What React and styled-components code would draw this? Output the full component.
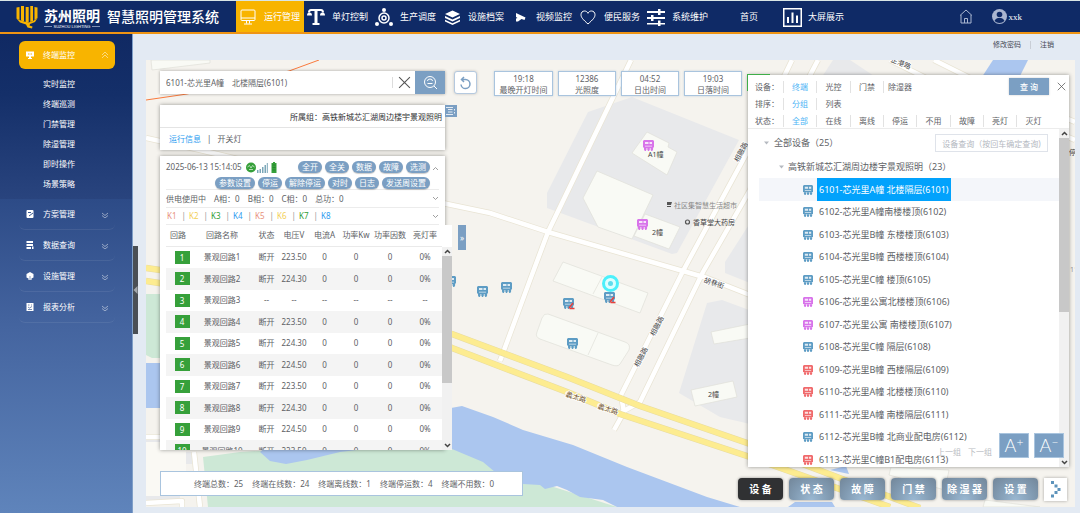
import React from "react";
import styled, { createGlobalStyle, css } from "styled-components";

const steel = "#7b9fc3";
const text = "#606266";

const GlobalStyle = createGlobalStyle`
  *, *::before, *::after { box-sizing: border-box; }
  html, body { margin: 0; padding: 0; }
  body {
    font-family: "Noto Sans", "Noto Sans CJK SC", sans-serif;
    font-size: 8px;
    line-height: 12px;
    color: ${text};
    background: #e3eaf3;
  }
  button, input { font: inherit; color: inherit; border: 0; padding: 0; margin: 0; background: none; }
  button { cursor: pointer; }
  a { color: inherit; text-decoration: none; }
  svg { display: block; flex: none; }
  ul { list-style: none; margin: 0; padding: 0; }
`;

const Page = styled.div`
  display: flex;
  flex-direction: column;
  height: 100vh;
  overflow: hidden;
`;

/* ---------- header ---------- */
const Header = styled.header`
  display: flex;
  align-items: stretch;
  height: 34px;
  flex: none;
  background: #0f2a66;
  border-top: 1px solid #d9e6e6;
  border-bottom: 2px solid #ee9414;
  color: #fff;
`;

const Brand = styled.div`
  display: flex;
  align-items: center;
  width: 236px;
  padding-left: 16px;
  flex: none;
`;

const BrandName = styled.div`
  display: flex;
  flex-direction: column;
  width: 56px;
  margin: 4px 7px 0 6px;
  font-size: 14px;
  line-height: 16px;
  font-weight: 700;
  white-space: nowrap;
`;

const BrandLatin = styled.span`
  display: flex;
  align-items: center;
  justify-content: center;
  gap: 2px;
  font: 400 4px/5px "Liberation Sans", sans-serif;
  &::before, &::after { content: ""; flex: 1; height: 1px; background: #8090b5; }
`;

const SystemName = styled.h1`
  margin: 0;
  font-size: 14px;
  line-height: 20px;
  font-weight: 500;
  white-space: nowrap;
`;

const Nav = styled.nav`
  display: flex;
  flex: 1;
`;

const NavItem = styled.a`
  display: flex;
  align-items: center;
  gap: 4px;
  width: 68px;
  font-size: 9px;
  white-space: nowrap;
  padding-top: 1px;
  ${(p) => p.$active && css`background: #f8b400;`}
`;

const NavIcon = styled.span`
  display: flex;
  justify-content: center;
  width: 24px;
`;

const HeaderTools = styled.div`
  display: flex;
  align-items: center;
  gap: 19px;
  padding-right: 58px;
`;

const UserLink = styled.a`
  display: flex;
  align-items: center;
  gap: 2px;
  font: 9px/12px "Liberation Serif", serif;
`;

/* ---------- frame ---------- */
const Body = styled.div`
  display: flex;
  flex: 1;
  min-height: 0;
`;

const Sidebar = styled.aside`
  width: 133px;
  flex: none;
  background: linear-gradient(#1f3d78 0, #2d4b87 165px, #44649f 290px, #5f84bb 100%);
  border-right: 1px solid #7f9fc8;
  color: #fff;
`;

const OpenGroup = styled.div`
  padding: 7px 17px 5px 19px;
  background: linear-gradient(#102963, #142f69 60px, #29447e);
`;

const GroupButton = styled.button`
  display: flex;
  align-items: center;
  width: 100%;
  height: 28px;
  padding: 0 6px 0 7px;
  border-radius: 6px;
  background: #f8b400;
  color: #fff;
`;

const GroupLabel = styled.span`
  flex: 1;
  text-align: left;
  padding-left: 9px;
`;

const SubList = styled.ul`
  padding-top: 5px;
`;

const SubItem = styled.li`
  height: 20px;
  padding-left: 24px;
  line-height: 20px;
`;

const ClosedGroups = styled.div`
  padding: 0 17px 0 19px;
`;

const ClosedButton = styled(GroupButton)`
  height: 31px;
  background: none;
  border-bottom: 1px solid #ffffff14;
`;

const Content = styled.div`
  display: flex;
  flex-direction: column;
  flex: 1;
  min-width: 0;
`;

const AccountBar = styled.div`
  display: flex;
  justify-content: flex-end;
  align-items: center;
  height: 26px;
  flex: none;
  padding: 0 26px 4px 0;
  font-size: 7px;
  color: #3f4652;
`;

const AccountLink = styled.a`
  padding: 0 9px;
  line-height: 8px;
  & + & { border-left: 1px solid #c9ced6; padding-right: 0; }
`;

const Workspace = styled.main`
  display: flex;
  flex: 1;
  min-height: 0;
  padding: 0 5px 6px 0;
`;

const Gutter = styled.div`
  width: 13px;
  flex: none;
  padding-top: 186px;
`;

const CollapseHandle = styled.button`
  display: flex;
  align-items: center;
  width: 5px;
  height: 88px;
  background: #4a4f55;
`;

const MapArea = styled.section`
  position: relative;
  flex: 1;
  min-width: 0;
  overflow: hidden;
  background: #f5f3ee;
`;

const MapSvg = styled.svg`
  position: absolute;
  inset: 0;
  width: 100%;
  height: 100%;
`;

const Overlay = styled.div`
  position: relative;
  display: flex;
  justify-content: space-between;
  height: 100%;
`;

/* ---------- left column ---------- */
const LeftZone = styled.div`
  display: flex;
  flex-direction: column;
  padding: 11px 0 11px 14px;
  min-height: 0;
`;

const TopTools = styled.div`
  display: flex;
  align-items: flex-start;
`;

const SearchBox = styled.form`
  display: flex;
  width: 285px;
  height: 23px;
  background: #fff;
  box-shadow: 0 0 3px #0005;
`;

const SearchInput = styled.input`
  flex: 1;
  min-width: 0;
  padding-left: 6px;
  outline: 0;
`;

const ClearButton = styled.button`
  display: flex;
  align-items: center;
  justify-content: center;
  width: 23px;
  height: 11px;
  margin-top: 6px;
  border-left: 1px solid #dcdcdc;
`;

const SearchButton = styled.button`
  display: flex;
  align-items: center;
  justify-content: center;
  width: 30px;
  background: ${steel};
`;

const RefreshButton = styled.button`
  display: flex;
  align-items: center;
  justify-content: center;
  width: 23px;
  height: 23px;
  margin: 0 17px 0 9px;
  background: #fff;
  border: 1px solid #b5c9df;
  border-radius: 3px;
  box-shadow: 0 0 3px #0003;
`;

const Stats = styled.div`
  display: flex;
  gap: 5px;
`;

const Stat = styled.div`
  width: 59px;
  height: 25px;
  padding-top: 1px;
  background: #fff;
  border: 1px solid #a9c4de;
  box-shadow: 0 0 2px #7b9fc366;
  text-align: center;
  line-height: 11px;
  white-space: nowrap;
  & + & { width: 58px; }
`;

const StatValue = styled.div``;

const PanelRow = styled.div`
  display: flex;
  align-items: flex-start;
`;

const GroupRow = styled(PanelRow)`
  margin: 9px 0 6px;
`;

const DeviceRow = styled(PanelRow)`
  flex: 1;
  min-height: 0;
`;

const Card = styled.section`
  width: 285px;
  background: #fff;
  box-shadow: 0 0 4px #0006;
`;

const CardTitle = styled.div`
  height: 23px;
  padding: 0 3px;
  border-bottom: 1px solid #e4e4e4;
  line-height: 24px;
  text-align: right;
  color: #303133;
  white-space: nowrap;
`;

const Tabs = styled.div`
  display: flex;
  gap: 6px;
  height: 22px;
  padding-left: 9px;
  line-height: 22px;
`;

const Tab = styled.button`
  color: ${(p) => (p.$active ? "#2d9cf0" : text)};
`;

const ListToggle = styled.button`
  display: flex;
  align-items: center;
  justify-content: center;
  width: 12px;
  height: 12px;
  background: ${steel};
`;

const DeviceCard = styled(Card)`
  display: flex;
  flex-direction: column;
  height: 100%;
  padding-left: 6px;
`;

const CardHead = styled.div`
  display: flex;
  justify-content: space-between;
  height: 34px;
  flex: none;
  padding-top: 5px;
  margin-right: 6px;
  border-bottom: 1px solid #ececec;
  position: relative;
`;

const TimeStamp = styled.div`
  display: flex;
  align-items: center;
  gap: 4px;
  height: 12px;
  white-space: nowrap;
`;

const ActionArea = styled.div`
  display: flex;
  flex-direction: column;
  align-items: flex-end;
  gap: 4px;
  margin-right: 9px;
  margin-left: -70px;
`;

const ActionRow = styled.div`
  display: flex;
  gap: 3px;
`;

const Pill = styled.button`
  height: 12px;
  padding: 0 4px;
  border-radius: 6px;
  background: ${steel};
  color: #fff;
  line-height: 12px;
  white-space: nowrap;
  box-shadow: 0 1px 1px #0003;
`;

const FoldButton = styled.button`
  display: flex;
  ${(p) => p.$corner && css`position: absolute; right: 0; top: 10px;`}
`;

const InfoRow = styled.div`
  display: flex;
  align-items: center;
  justify-content: space-between;
  height: ${(p) => (p.$first ? 18 : 17)}px;
  flex: none;
  margin-right: 6px;
  border-bottom: 1px solid #ececec;
`;

const PhaseList = styled.div`
  display: flex;
  gap: 8px;
  white-space: nowrap;
`;

const LoopList = styled.div`
  display: flex;
`;

const LoopLink = styled.a`
  width: 22px;
  padding-left: 1px;
  color: ${(p) => p.$color};
  &:not(:last-child)::after { content: "|"; color: #999; margin-left: 5px; }
`;

const TableBlock = styled.div`
  display: flex;
  flex-direction: column;
  flex: 1;
  width: 286px;
  min-height: 0;
  background: #fff;
`;

const TableScroll = styled.div`
  display: flex;
  flex: 1;
  min-height: 0;
  overflow: hidden;
`;

const LoopTable = styled.table`
  width: 276px;
  flex: none;
  align-self: flex-start;
  table-layout: fixed;
  border-collapse: collapse;
  text-align: center;
  white-space: nowrap;
`;

const Th = styled.th`
  height: 21px;
  padding: 0;
  padding-right: ${(p) => (p.$name ? 8 : 0)}px;
  font-weight: 400;
  border-bottom: 1px solid #eaeaea;
`;

const Tr = styled.tr`
  height: 21px;
  &:nth-child(even) { height: 22px; background: #f4f4f4; }
`;

const Td = styled.td`
  padding: 0;
  padding-right: ${(p) => (p.$name ? 8 : 0)}px;
`;

const LoopBadge = styled.span`
  display: block;
  width: 15px;
  margin: 0 auto;
  background: #36a03a;
  color: #fff;
  line-height: 13px;
`;

const ScrollBar = styled.div`
  display: flex;
  flex-direction: column;
  align-items: center;
  width: 10px;
  flex: none;
  padding: 2px 0;
  background: #f1f1f1;
`;

const ScrollThumb = styled.div`
  width: 100%;
  margin: 2px 0 auto;
  height: ${(p) => p.$size}%;
  background: #c8c8c8;
`;

const SideHandle = styled.button`
  width: 8px;
  height: 25px;
  margin: 69px 0 0 13px;
  background: ${steel};
  color: #fff;
`;

const StatusBar = styled.footer`
  display: flex;
  align-items: center;
  gap: 9px;
  width: 363px;
  height: 25px;
  flex: none;
  margin-top: 21px;
  padding-left: 33px;
  background: #fff;
  border: 1px solid #a9c4de;
  white-space: nowrap;
`;

/* ---------- right column ---------- */
const RightZone = styled.div`
  display: flex;
  flex-direction: column;
  align-items: flex-end;
  flex: none;
  padding: 15px 6px 6px 0;
  min-height: 0;
`;

const TreePanel = styled.section`
  position: relative;
  display: flex;
  flex-direction: column;
  flex: 1;
  min-height: 0;
  width: 321px;
  background: #fff;
  box-shadow: 0 0 4px #0006;
  &::before {
    content: "";
    position: absolute;
    left: -1px;
    top: -1px;
    width: 23px;
    height: 17px;
    border: solid #3fae49;
    border-width: 1px 0 0 1px;
  }
`;

const Filters = styled.div`
  display: flex;
  justify-content: space-between;
  height: 54px;
  flex: none;
  padding-top: 3px;
  border-bottom: 1px solid #ececec;
`;

const FilterRow = styled.div`
  display: flex;
  align-items: center;
  height: 17px;
  padding-left: 7px;
`;

const FilterLabel = styled.span`
  width: 28px;
  white-space: nowrap;
`;

const FilterOption = styled.button`
  width: ${(p) => (p.$wide ? 34 : 33)}px;
  border-left: 1px solid #e2e2e2;
  line-height: 12px;
  white-space: nowrap;
  color: ${(p) => (p.$active ? "#4db4f5" : text)};
`;

const FilterActions = styled.div`
  display: flex;
  align-items: flex-start;
  gap: 8px;
  padding-right: 3px;
  margin-left: -60px;
`;

const QueryButton = styled.button`
  width: 40px;
  height: 17px;
  background: ${steel};
  color: #fff;
  font-weight: 500;
  box-shadow: 0 0 2px #0003;
`;

const CloseButton = styled.button`
  display: flex;
  margin-top: 4px;
`;

const TreeBody = styled.div`
  display: flex;
  flex: 1;
  min-height: 0;
  overflow: hidden;
`;

const Tree = styled.div`
  flex: 1;
  min-width: 0;
  padding-left: 11px;
  font-size: 9px;
`;

const TreeRoot = styled.div`
  display: flex;
  align-items: center;
  gap: 5px;
  height: 26px;
  padding: 0 11px 0 5px;
  margin-top: 1px;
`;

const TreeGroup = styled.div`
  display: flex;
  align-items: center;
  gap: 4px;
  height: 22px;
  padding-left: 20px;
`;

const TreeInput = styled.input`
  width: 113px;
  height: 18px;
  margin-left: auto;
  border: 1px solid #dfe3ea;
  font-size: 8px;
  text-align: center;
  &::placeholder { color: #b4b8bf; }
`;

const TreeItem = styled.li`
  display: flex;
  align-items: center;
  gap: 4px;
  height: 23px;
  padding-left: 44px;
  background: ${(p) => (p.$active ? "#f4f6fa" : "#fff")};
  &:nth-child(even) { height: 22px; }
`;

const TreeName = styled.a`
  align-self: stretch;
  display: flex;
  align-items: center;
  padding: 0 2px;
  white-space: pre;
  ${(p) => p.$active && css`background: #02a2fc; color: #fff;`}
`;

const FloatTools = styled.div`
  position: absolute;
  right: 5px;
  bottom: 9px;
  display: flex;
  align-items: flex-end;
  gap: 5px;
`;

const GroupStep = styled.button`
  color: #b9bcc2;
  margin-right: 2px;
`;

const FontButton = styled.button`
  display: flex;
  align-items: center;
  justify-content: center;
  width: 30px;
  height: 25px;
  background: ${steel};
  border: 1px solid #a9c4de;
  color: #fff;
  font: 300 18px/23px Lato, sans-serif;
`;

const FontSign = styled.span`
  align-self: flex-start;
  font-size: 12px;
  line-height: 15px;
`;

const ModeRow = styled.div`
  display: flex;
  gap: 6px;
  margin: 11px 2px 0 -20px;
`;

const ModeButton = styled.button`
  width: 45px;
  height: 22px;
  border-radius: 4px;
  color: #fff;
  font-size: 10px;
  font-weight: 700;
  white-space: nowrap;
  box-shadow: 0 0 3px #0006;
  background: ${(p) =>
    p.$active
      ? "#303133"
      : "radial-gradient(ellipse at 50% 100%, #9ab8d2 0, #8099b0 60%, #728699 100%)"};
`;

const MoreButton = styled.button`
  display: flex;
  align-items: center;
  justify-content: center;
  width: 23px;
  height: 23px;
  background: #fff;
  box-shadow: 0 0 3px #0005;
`;

/* ---------- drawings ---------- */
const Logo = () => (
  <svg width="22" height="24" viewBox="0 0 22 24" fill="#f8b400">
    <path d="M0.500 2.500L3.500 2V15L0.500 13.500zM5 1H8V16.500L5 15.500zM9.700 2H12.700V17.500H9.700zM14.300 1H17V16L14.300 17zM18.500 2L21.500 2.500V13L18.500 15z" />
    <path d="M0.500 13.500L3.500 15 8 16.500 12.700 17.500 17 16 21.500 13 19 17 14 19 13.500 20.500 16.500 21.500 16 23.500 11.500 22.500 10 19.500 4 17.500z" />
  </svg>
);

const stroke = { fill: "none", stroke: "#fff" };
const navIcons = {
  monitor: (
    <svg width="16" height="16" viewBox="0 0 16 16" {...stroke}>
      <rect x="1" y="1" width="14" height="10.500" rx="1" />
      <path d="M1 9h14M6.500 11.500v3M9.500 11.500v3M4 15h8" />
    </svg>
  ),
  lamp: (
    <svg width="18" height="18" viewBox="0 0 18 18" fill="#fff">
      <path d="M4 1h10c2 0 3 1.500 3 3.500h-2c0-1-.5-1.500-1.500-1.500H10.500v12h2v2h-7v-2h2V3H4.500C3.500 3 3 3.500 3 4.500H1C1 2.500 2 1 4 1z" />
      <path d="M0 7.500a2.500 3 0 0 1 5 0zM13 7.500a2.500 3 0 0 1 5 0z" />
    </svg>
  ),
  dispatch: (
    <svg width="18" height="18" viewBox="0 0 18 18" {...stroke}>
      <circle cx="9" cy="10" r="5" strokeWidth="1.500" />
      <circle cx="9" cy="10" r="2" strokeWidth="1.500" />
      <g fill="#fff" stroke="none"><circle cx="9" cy="2" r="2" /><circle cx="2" cy="16" r="2" /><circle cx="16" cy="16" r="2" /></g>
    </svg>
  ),
  layers: (
    <svg width="15" height="15" viewBox="0 0 15 15" fill="#fff">
      <path d="M7.500 0.500L15 4 7.500 7.500 0 4zM0 6l7.500 3.500L15 6v2L7.500 11.500 0 8zM0 9.800l7.500 3.500L15 9.800v1.700L7.500 15 0 11.500z" />
    </svg>
  ),
  camera: (
    <svg width="11" height="11" viewBox="0 0 11 11" fill="#fff">
      <path d="M1 1l9.500 4.500-1 2.500-3-1L3 9.500H1V6.500L2.500 6 1 5z" />
    </svg>
  ),
  heart: (
    <svg width="16" height="15" viewBox="0 0 16 15" {...stroke}>
      <path d="M8 14C3 9.500 1 7.500 1 4.700 1 2.500 2.500 1 4.500 1 6 1 7.300 1.800 8 3.300 8.700 1.800 10 1 11.500 1 13.500 1 15 2.500 15 4.700 15 7.500 13 9.500 8 14z" />
    </svg>
  ),
  sliders: (
    <svg width="18" height="17" viewBox="0 0 18 17" fill="#fff">
      <path d="M0 2h18v2H0zM0 8h18v2H0zM0 14h18v1.500H0z" />
      <rect x="11" y="0" width="2.500" height="6" /><rect x="4" y="6" width="2.500" height="6" /><rect x="11" y="11.500" width="2.500" height="5.500" />
    </svg>
  ),
  chart: (
    <svg width="19" height="19" viewBox="0 0 19 19" fill="#fff">
      <path d="M0 0h19v19H0zM1.500 1.500v16h16v-16z" fillRule="evenodd" />
      <path d="M4 9h2v6H4zM8.500 4.500h2V15h-2zM13 7.500h2V15h-2z" />
    </svg>
  ),
};

const sideIcons = {
  board: <svg width="8" height="8" viewBox="0 0 8 8" fill="#fff"><path d="M0 0.500h8v5H5V7h1v1H2V7h1V5.500H0zM2 2.500v1h1.500V2.500zM4.500 2.500v1H6v-1z" fillRule="evenodd" /></svg>,
  plan: <svg width="8" height="8" viewBox="0 0 8 8"><rect width="7" height="8" x="0.500" rx="1" fill="#fff" /><path d="M2 2.500h3M3 6l4-3" stroke="#3b5a94" fill="none" /></svg>,
  data: <svg width="8" height="8" viewBox="0 0 8 8" fill="#fff"><path d="M0.500 0h6.500v2H0.500zM0.500 3h6.500v2H0.500zM0.500 6H5v2H0.500zM6 5.500h1.500V8H6z" /></svg>,
  device: <svg width="8" height="8" viewBox="0 0 8 8" fill="#fff"><path d="M4 0l3.500 2v3.500L5.500 6.500V8h-3V6.500L0.500 5.500V2z" /><path d="M4 4v4" stroke="#3b5a94" strokeWidth="0.600" /></svg>,
  report: <svg width="8" height="8" viewBox="0 0 8 8"><rect x="0.500" width="7" height="8" fill="#fff" /><path d="M2 2h1.500M5 2h1M2 4l1.500 1L6 3.500M2 6.500h4" stroke="#3b5a94" strokeWidth="0.700" fill="none" /></svg>,
};

const DoubleChevron = ({ up }) => (
  <svg width="8" height="8" viewBox="0 0 8 8" fill="none" stroke="#fff" strokeWidth="0.700" opacity="0.7">
    <path d={up ? "M1 4l3-3 3 3M1 7l3-3 3 3" : "M1 3l3 2.500 3-2.500M1 5.500l3 2.500 3-2.500"} />
  </svg>
);

const Chevron = ({ up, bold }) => (
  <svg width="7" height="5" viewBox="0 0 7 5" fill="none" stroke={bold ? "#444" : "#888"} strokeWidth={bold ? 1.5 : 0.8}>
    <path d={up ? "M1 4l2.500-2.500L6 4" : "M1 1l2.500 2.500L6 1"} />
  </svg>
);

const Cross = ({ size }) => (
  <svg width={size} height={size} viewBox="0 0 12 12" stroke="#555" fill="none"><path d="M1 1l10 10M11 1L1 11" /></svg>
);

const Caret = () => (
  <svg width="5" height="4" viewBox="0 0 5 4" fill="#b5b9c0"><path d="M0 0.500h5L2.500 3.500z" /></svg>
);

const DeviceShape = ({ color }) => (
  <g>
    <path d="M1 0h9L11 1v6L10 8H1L0 7V1z" fill={color} />
    <path d="M2 2h3.500v2H2zM6.500 2H9v2H6.500zM2 5.800h7v0.700H2z" fill="#fff" opacity="0.8" />
    <path d="M1 8h2.500v1.500L2.800 11h-1L1 9.500zM4.300 8h2.500v1.500L6 11H5L4.300 9.500zM7.600 8h2.500v1.500L9.300 11h-1l-.7-1.500z" fill={color} />
  </g>
);

const DeviceIcon = ({ color }) => (
  <svg width="10" height="10" viewBox="0 0 11 11"><DeviceShape color={color} /></svg>
);

const Pin = ({ x, y, color, alarm }) => (
  <g transform={`translate(${x} ${y})`}>
    <DeviceShape color={color} />
    {alarm && <path d="M6 10l4-5M6.500 10.500h5" stroke="#e8403c" strokeWidth="1.500" fill="none" />}
  </g>
);

const roads = {
  white: [
    "M631 60L548 232L530 280L500 361",
    "M146 138L200 150L250 162L380 188L447 204L490 213L548 232L683 271L707 278L750 295L790 312",
    "M792 60L750 147L683 271L621 395L624 412L614 430",
    "M818 60L750 190L703 272L640 402L622 412",
    "M890 60L930 80L1075 140",
    "M934 60L970 78L1075 122",
    "M146 437L200 437M146 503L182 501L182 507M194 452L200 507",
  ],
  yellow: [
    "M146 268L300 290L452 334L567 377L640 406L750 444L850 482L920 508",
    "M146 281L300 305L452 348L567 392L620 414L750 457L890 507",
  ],
};

const buildings = [
  "M647 132L669 143L668 147L677 152L667 175L632 153z",
  "M597 171L653 195L632 239L598 227L583 198z",
  "M645 214L680 227L669 249L634 236z",
  "M563 262L648 293L640 313L553 281zM602 277L593 294",
  "M548 314L625 342Q631 344 629 350L620 364Q618 367 612 365L540 339Q535 337 537 332L542 318Q544 313 548 314zM598 333L588 355",
  "M711 332L750 324L750 338L714 344z",
  "M691 390L733 381L737 397L695 406z",
  "M151 60L152 70L210 63L210 60z",
  "M891 467L889 475L945 490L949 470z",
  "M985 500L983 507L1040 507z",
];

const RoadLabel = ({ x, y, r, children, fill = "#444" }) => (
  <text x={x} y={y} fontSize="7" fill={fill} stroke="#fff" strokeWidth="1.500" paintOrder="stroke" textAnchor="middle" dominantBaseline="central" transform={`rotate(${r} ${x} ${y})`}>
    {children}
  </text>
);

const CityMap = () => (
  <MapSvg viewBox="146 60 929 447" preserveAspectRatio="xMidYMid slice">
    <rect x="0" y="0" width="1400" height="900" fill="#f5f3ee" />
    <g fill="#e8e9eb">
      <path d="M588 112L632 97L739 140L677 253L672 254L547 208L547 193z" />
      <path d="M707 303L722 300L790 325V450L750 424L720 417L679 393z" />
      <path d="M750 223L725 262V273L750 283H800V200z" />
      <path d="M833 60L820 80H880L850 60z" />
      <path d="M170 452h22v12h-22zM146 440h40v3h-40zM146 496h34v4h-34z" />
    </g>
    <path d="M146 442h40v54h-40z" fill="#faf9f4" />
    <g fill="#cde8d6">
      <path d="M146 294H175V358H152L146 355z" />
      <path d="M203 457L240 452L452 440L500 470L617 507H208z" />
    </g>
    <g fill="#abc6ef">
      <path d="M146 363H170V408H146z" />
      <path d="M260 452L270 461L286 464L307 460L340 452L440 440L452 449L483 462L495 472L523 484L540 485L545 489L557 486L567 490L580 497L603 500L617 507H740L707 497L627 467L573 445L523 430L493 417L462 406L440 410L300 420z" />
      <path d="M993 60H1028L1018 80H980z" />
      <path d="M846 466L849 474L830 470zM788 507L795 502H832L835 507z" />
    </g>
    <g fill="none" strokeLinejoin="round">
      {roads.white.map((d) => <path key={d} d={d} stroke="#e9e4d4" strokeWidth="6" />)}
      {roads.white.map((d) => <path key={d} d={d} stroke="#fff" strokeWidth="4.500" />)}
      {roads.yellow.map((d) => <path key={d} d={d} stroke="#e8dca0" strokeWidth="6.500" />)}
      {roads.yellow.map((d) => <path key={d} d={d} stroke="#fdec90" strokeWidth="5.500" />)}
      <path d="M146 100L187 94L289 71L319 60" stroke="#f97a3d" />
    </g>
    <g fill="#f9faf5" stroke="#dfdfd9" strokeWidth="0.700">
      {buildings.map((d) => <path key={d} d={d} />)}
    </g>
    <RoadLabel x={741} y={152} r={-62}>相融路</RoadLabel>
    <RoadLabel x={657} y={326} r={-62}>相融路</RoadLabel>
    <RoadLabel x={641} y={357} r={-62}>相融路</RoadLabel>
    <RoadLabel x={714} y={283} r={18}>胡巷街</RoadLabel>
    <RoadLabel x={576} y={397} r={18} fill="#6a4a1a">蠡太路</RoadLabel>
    <RoadLabel x={608} y={409} r={18} fill="#6a4a1a">蠡太路</RoadLabel>
    <RoadLabel x={901} y={63} r={22}>芷港路</RoadLabel>
    <text x="648" y="157" fontSize="7" fill="#444">A1幢</text>
    <text x="652" y="235" fontSize="7" fill="#444">2幢</text>
    <text x="708" y="397" fontSize="7" fill="#444">2幢</text>
    <text x="674" y="208" fontSize="7" fill="#888">社区集智慧生活超市</text>
    <text x="693" y="225" fontSize="7" fill="#444">香草堂大药房</text>
    <path d="M667 202h5l-1 3h-4zM667 206h4v1h-4z" fill="#555" />
    <circle cx="687.500" cy="222" r="2" fill="none" stroke="#555" strokeWidth="1.200" />
    <Pin x={643} y={140} color="#d873ea" />
    <Pin x={637} y={219} color="#d873ea" />
    <Pin x={445} y={276} color="#5d9cc4" />
    <Pin x={477} y={286} color="#5d9cc4" />
    <Pin x={501} y={282} color="#5d9cc4" />
    <Pin x={563} y={298} color="#5d9cc4" alarm />
    <Pin x={604} y={292} color="#5d9cc4" alarm />
    <Pin x={567} y={338} color="#5d9cc4" />
    <circle cx="610.500" cy="283.500" r="7" fill="#dff" stroke="#4cf0fb" strokeWidth="3" />
    <circle cx="610.500" cy="283.500" r="2.500" fill="#5fdcec" />
    <text x="1070" y="272" fontSize="7" fill="#999">11</text>
    <text x="1069" y="155" fontSize="7" fill="#444">停</text>
  </MapSvg>
);

/* ---------- data ---------- */
const nav = [
  ["运行管理", "monitor"], ["单灯控制", "lamp"], ["生产调度", "dispatch"], ["设施档案", "layers"],
  ["视频监控", "camera"], ["便民服务", "heart"], ["系统维护", "sliders"], ["首页", null], ["大屏展示", "chart"],
];
const subItems = ["实时监控", "终端巡测", "门禁管理", "除湿管理", "即时操作", "场景策略"];
const closed = [["方案管理", "plan"], ["数据查询", "data"], ["设施管理", "device"], ["报表分析", "report"]];
const stats = [["19:18", "最晚开灯时间"], ["12386", "光照度"], ["04:52", "日出时间"], ["19:03", "日落时间"]];
const actions = [
  ["全开", "全关", "数据", "故障", "选测"],
  ["参数设置", "停运", "解除停运", "对时", "日志", "发送周设置"],
];
const loopColors = ["#e8927c", "#f3cf55", "#2f9e35", "#2d9cf0"];
const columns = [["回路", 32], ["回路名称", 56], ["状态", 25], ["电压V", 30], ["电流A", 31], ["功率Kw", 32], ["功率因数", 36], ["亮灯率", 34]];
const volts = ["223.50", "224.30", null, "223.50", "224.30", "224.50", "223.50", "224.30", "224.50", "223.50"];
const totals = ["终端总数：25", "终端在线数：24", "终端离线数：1", "终端停运数：4", "终端不用数：0"];
const filters = [
  ["设备：", ["终端", "光控", "门禁", "除湿器"]],
  ["排序：", ["分组", "列表"]],
  ["状态：", ["全部", "在线", "离线", "停运", "不用", "故障", "亮灯", "灭灯"]],
];
const blue = "#5d9cc4", pink = "#d873ea", red = "#f06a6c";
const devices = [
  ["6101-芯光里A幢 北楼隔层(6101)", blue], ["6102-芯光里A幢南楼楼顶(6102)", blue],
  ["6103-芯光里B幢 东楼楼顶(6103)", blue], ["6104-芯光里B幢 西楼楼顶(6104)", blue],
  ["6105-芯光里C幢 楼顶(6105)", blue], ["6106-芯光里公寓北楼楼顶(6106)", pink],
  ["6107-芯光里公寓 南楼楼顶(6107)", pink], ["6108-芯光里C幢 隔层(6108)", blue],
  ["6109-芯光里B幢 西楼隔层(6109)", red], ["6110-芯光里A幢 北楼楼顶(6110)", red],
  ["6111-芯光里A幢 南楼隔层(6111)", red], ["6112-芯光里B幢 北商业配电房(6112)", blue],
  ["6113-芯光里C幢B1配电房(6113)", red],
];
const modes = ["设 备", "状 态", "故 障", "门 禁", "除 湿 器", "设 置"];

const Scroller = ({ size }) => (
  <ScrollBar>
    <Chevron up bold />
    <ScrollThumb $size={size} />
    <Chevron bold />
  </ScrollBar>
);

const TopHeader = () => (
  <Header>
    <Brand>
      <Logo />
      <BrandName>苏州照明<BrandLatin>SUZHOU LIGHTING</BrandLatin></BrandName>
      <SystemName>智慧照明管理系统</SystemName>
    </Brand>
    <Nav>
      {nav.map(([label, icon], i) => (
        <NavItem key={label} href="#" $active={i === 0}>
          <NavIcon>{icon && navIcons[icon]}</NavIcon>
          {label}
        </NavItem>
      ))}
    </Nav>
    <HeaderTools>
      <a href="#" aria-label="主页">
        <svg width="14" height="15" viewBox="0 0 14 15" fill="none" stroke="#aab6d0">
          <path d="M1 6.500L7 1l6 5.500M2 6v8h10V6M5.500 14v-4.500h3V14" />
        </svg>
      </a>
      <UserLink href="#">
        <svg width="15" height="15" viewBox="0 0 15 15">
          <circle cx="7.500" cy="7.500" r="7.500" fill="#aab6d0" />
          <circle cx="7.500" cy="5.500" r="2.800" fill="#0f2a66" />
          <path d="M2.500 12c1-2.500 3-3 5-3s4 .5 5 3c-3 2.500-7 2.500-10 0z" fill="#0f2a66" />
        </svg>
        xxk
      </UserLink>
    </HeaderTools>
  </Header>
);

const SideMenu = () => (
  <Sidebar>
    <OpenGroup>
      <GroupButton>{sideIcons.board}<GroupLabel>终端监控</GroupLabel><DoubleChevron up /></GroupButton>
      <SubList>
        {subItems.map((s) => <SubItem key={s}><a href="#">{s}</a></SubItem>)}
      </SubList>
    </OpenGroup>
    <ClosedGroups>
      {closed.map(([label, icon]) => (
        <ClosedButton key={label}>{sideIcons[icon]}<GroupLabel>{label}</GroupLabel><DoubleChevron /></ClosedButton>
      ))}
    </ClosedGroups>
  </Sidebar>
);

const LeftColumn = () => (
  <LeftZone>
    <TopTools>
      <SearchBox onSubmit={(e) => e.preventDefault()}>
        <SearchInput aria-label="终端" defaultValue="6101-芯光里A幢　北楼隔层(6101)" />
        <ClearButton type="button" aria-label="清除"><Cross size={13} /></ClearButton>
        <SearchButton aria-label="搜索">
          <svg width="15" height="15" viewBox="0 0 15 15" fill="none" stroke="#fff">
            <circle cx="7" cy="7" r="5.500" /><path d="M11 11l3 3M4.500 6a2.500 2 0 0 1 5 0M4.500 8.500h5" />
          </svg>
        </SearchButton>
      </SearchBox>
      <RefreshButton aria-label="刷新">
        <svg width="13" height="14" viewBox="0 0 13 14" fill="none" stroke={steel} strokeWidth="1.500">
          <path d="M5 1L2.500 3.500 5 6M2.500 3.500H6.500a4.500 4.500 0 1 1-4.500 5" />
        </svg>
      </RefreshButton>
      <Stats>
        {stats.map(([v, l]) => <Stat key={l}><StatValue>{v}</StatValue>{l}</Stat>)}
      </Stats>
    </TopTools>
    <GroupRow>
      <Card>
        <CardTitle>所属组：高铁新城芯汇湖周边楼宇景观照明</CardTitle>
        <Tabs><Tab $active>运行信息</Tab>|<Tab>开关灯</Tab></Tabs>
      </Card>
      <ListToggle aria-label="列表">
        <svg width="10" height="8" viewBox="0 0 10 8" stroke="#fff" fill="none" strokeWidth="0.800">
          <path d="M0 0.500h7M2 2.500h4.500M2 5h4.500M0 7.500h7M8.500 2v1.500M8.500 5v1.500" />
        </svg>
      </ListToggle>
    </GroupRow>
    <DeviceRow>
      <DeviceCard>
        <CardHead>
          <TimeStamp>
            2025-06-13 15:14:05
            <svg width="31" height="11" viewBox="0 0 31 11">
              <circle cx="5" cy="5.500" r="5" fill="#36a03a" />
              <path d="M1.500 5l2-1.500L5 6l1.500-2.500L8.500 5M3 7.500h4" stroke="#cfe8d0" fill="none" strokeWidth="0.800" />
              <path d="M11 8h1.500v3H11zM13.500 7H15v4h-1.500zM16 5h1.500v6H16zM18.500 3H20v8h-1.500zM20.800 1h1v10h-1z" fill="#7ba7b8" />
              <path d="M27 0h2v1h1.500v10h-5V1H27z" fill="#36a03a" /><path d="M26.500 3h3M26.500 5.500h3M26.500 8h3" stroke="#1f7a28" strokeWidth="0.600" />
            </svg>
          </TimeStamp>
          <ActionArea>
            {actions.map((row) => (
              <ActionRow key={row[0]}>{row.map((a) => <Pill key={a}>{a}</Pill>)}</ActionRow>
            ))}
          </ActionArea>
          <FoldButton $corner aria-label="收起"><Chevron up /></FoldButton>
        </CardHead>
        <InfoRow $first>
          <PhaseList>
            <span>供电使用中</span><span>A相：0</span><span>B相：0</span><span>C相：0</span><span>总功：0</span>
          </PhaseList>
          <FoldButton aria-label="展开"><Chevron /></FoldButton>
        </InfoRow>
        <InfoRow>
          <LoopList>
            {[1, 2, 3, 4, 5, 6, 7, 8].map((n) => (
              <LoopLink key={n} href="#" $color={loopColors[(n - 1) % 4]}>K{n}</LoopLink>
            ))}
          </LoopList>
          <FoldButton aria-label="展开"><Chevron /></FoldButton>
        </InfoRow>
        <TableBlock>
          <LoopTable>
            <colgroup>{columns.map(([c, w]) => <col key={c} width={w} />)}</colgroup>
            <thead><tr>{columns.map(([c], i) => <Th key={c} $name={i < 2}>{c}</Th>)}</tr></thead>
          </LoopTable>
          <TableScroll>
            <LoopTable>
              <colgroup>{columns.map(([c, w]) => <col key={c} width={w} />)}</colgroup>
              <tbody>
                {volts.map((v, i) => (
                  <Tr key={i}>
                    <Td><LoopBadge>{i + 1}</LoopBadge></Td>
                    <Td $name>景观回路{i + 1}</Td>
                    <Td>{v ? "断开" : "--"}</Td>
                    <Td>{v || "--"}</Td>
                    {[0, 1, 2].map((k) => <Td key={k}>{v ? "0" : "--"}</Td>)}
                    <Td>{v ? "0%" : "--"}</Td>
                  </Tr>
                ))}
              </tbody>
            </LoopTable>
            <Scroller size={64} />
          </TableScroll>
        </TableBlock>
      </DeviceCard>
      <SideHandle aria-label="展开面板">»</SideHandle>
    </DeviceRow>
    <StatusBar>{totals.map((t) => <span key={t}>{t}</span>)}</StatusBar>
  </LeftZone>
);

const RightColumn = () => (
  <RightZone>
    <TreePanel>
      <Filters>
        <div>
          {filters.map(([label, options]) => (
            <FilterRow key={label}>
              <FilterLabel>{label}</FilterLabel>
              {options.map((o, i) => <FilterOption key={o} $active={i === 0} $wide={i % 3 === 1}>{o}</FilterOption>)}
            </FilterRow>
          ))}
        </div>
        <FilterActions>
          <QueryButton>查 询</QueryButton>
          <CloseButton aria-label="关闭"><Cross size={9} /></CloseButton>
        </FilterActions>
      </Filters>
      <TreeBody>
        <Tree>
          <TreeRoot><Caret />全部设备（25）<TreeInput aria-label="设备查询" placeholder="设备查询（按回车确定查询)" /></TreeRoot>
          <TreeGroup><Caret />高铁新城芯汇湖周边楼宇景观照明（23）</TreeGroup>
          <ul>
            {devices.map(([name, color], i) => (
              <TreeItem key={name} $active={i === 0}>
                <DeviceIcon color={color} />
                <TreeName href="#" $active={i === 0}>{name}</TreeName>
              </TreeItem>
            ))}
          </ul>
        </Tree>
        <Scroller size={52} />
      </TreeBody>
      <FloatTools>
        <GroupStep>上一组</GroupStep>
        <GroupStep>下一组</GroupStep>
        <FontButton aria-label="放大字体">A<FontSign>+</FontSign></FontButton>
        <FontButton aria-label="缩小字体">A<FontSign>−</FontSign></FontButton>
      </FloatTools>
    </TreePanel>
    <ModeRow>
      {modes.map((m, i) => <ModeButton key={m} $active={i === 0}>{m}</ModeButton>)}
      <MoreButton aria-label="更多">
        <svg width="11" height="17" viewBox="0 0 11 17" fill="#5d93bb">
          <path d="M1 0h3v3H1zM4.500 3.500h3v3h-3zM7.500 7h3v3h-3zM4.500 10h3v3h-3zM1 13.500h3v3H1z" />
        </svg>
      </MoreButton>
    </ModeRow>
  </RightZone>
);

export default function App() {
  return (
    <Page>
      <GlobalStyle />
      <TopHeader />
      <Body>
        <SideMenu />
        <Content>
          <AccountBar>
            <AccountLink href="#">修改密码</AccountLink>
            <AccountLink href="#">注销</AccountLink>
          </AccountBar>
          <Workspace>
            <Gutter>
              <CollapseHandle aria-label="收起菜单">
                <svg width="5" height="8" viewBox="0 0 5 8" fill="#a5a9ad"><path d="M4.500 0v8L0.500 4z" /></svg>
              </CollapseHandle>
            </Gutter>
            <MapArea>
              <CityMap />
              <Overlay>
                <LeftColumn />
                <RightColumn />
              </Overlay>
            </MapArea>
          </Workspace>
        </Content>
      </Body>
    </Page>
  );
}
